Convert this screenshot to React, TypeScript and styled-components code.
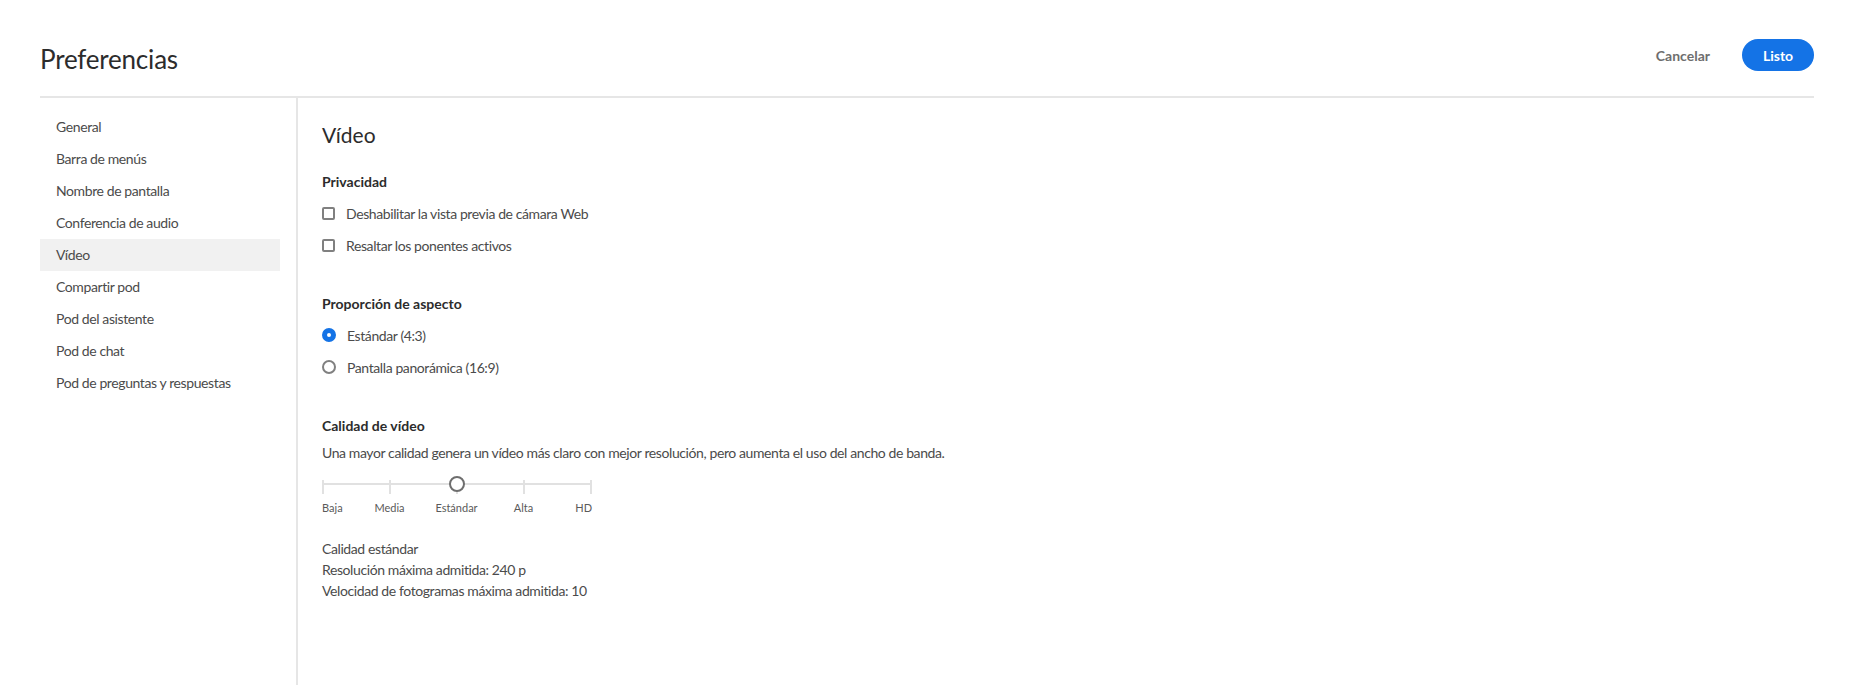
import React, { useState } from 'react';
import styled, { createGlobalStyle } from 'styled-components';

const GlobalStyle = createGlobalStyle`
  html, body {
    margin: 0;
    padding: 0;
    background: #ffffff;
  }
  body {
    font-family: Lato, "Noto Sans", "Liberation Sans", sans-serif;
    color: #4b4b4b;
    -webkit-font-smoothing: antialiased;
  }
  * {
    box-sizing: border-box;
  }
`;

const Page = styled.div`
  display: flex;
  flex-direction: column;
  height: 685px;
  padding: 0 38px 0 40px;
`;

const Header = styled.header`
  display: flex;
  align-items: flex-start;
  height: 98px;
  padding-top: 39px;
  border-bottom: 2px solid #e6e6e6;
`;

const Title = styled.h1`
  flex: 1;
  margin: 4px 0 0 0;
  font-size: 26px;
  line-height: 32px;
  font-weight: 400;
  letter-spacing: -0.2px;
  color: #2c2c2c;
`;

const Actions = styled.div`
  display: flex;
  align-items: center;
  gap: 16px;
`;

const QuietButton = styled.button`
  height: 32px;
  padding: 0 16px;
  border: none;
  background: transparent;
  font-family: inherit;
  font-size: 14px;
  font-weight: 700;
  color: #6e6e6e;
  cursor: pointer;
`;

const PrimaryButton = styled.button`
  height: 32px;
  min-width: 72px;
  padding: 0 18px;
  border: none;
  border-radius: 16px;
  background: #1473e6;
  font-family: inherit;
  font-size: 14px;
  font-weight: 700;
  color: #ffffff;
  cursor: pointer;
`;

const Body = styled.div`
  flex: 1;
  display: flex;
  min-height: 0;
`;

const Sidebar = styled.nav`
  width: 258px;
  padding: 13px 16px 0 0;
  border-right: 2px solid #e6e6e6;
  display: flex;
  flex-direction: column;
`;

const NavItem = styled.div<{ $active?: boolean }>`
  height: 32px;
  line-height: 32px;
  padding-left: 16px;
  font-size: 14px;
  letter-spacing: -0.4px;
  color: #4b4b4b;
  background: ${(p) => (p.$active ? '#f1f1f1' : 'transparent')};
  cursor: pointer;
`;

const Content = styled.main`
  flex: 1;
  padding: 23px 0 0 24px;
`;

const PanelTitle = styled.h2`
  margin: 0;
  font-size: 21px;
  line-height: 28px;
  font-weight: 400;
  color: #2c2c2c;
`;

const Section = styled.section<{ $first?: boolean }>`
  margin-top: ${(p) => (p.$first ? '23px' : '33px')};
`;

const SectionTitle = styled.h3`
  margin: 0;
  font-size: 14px;
  line-height: 20px;
  font-weight: 700;
  color: #2c2c2c;
`;

const Options = styled.div`
  margin-top: 5px;
  display: flex;
  flex-direction: column;
`;

const OptionRow = styled.label`
  display: flex;
  align-items: center;
  gap: 11px;
  height: 32px;
  font-size: 14px;
  letter-spacing: -0.4px;
  color: #4b4b4b;
  cursor: pointer;
`;

const CheckBox = styled.span`
  width: 13px;
  height: 13px;
  border: 2px solid #808080;
  border-radius: 2px;
  background: #ffffff;
  flex-shrink: 0;
`;

const Radio = styled.span<{ $checked?: boolean }>`
  width: 14px;
  height: 14px;
  border-radius: 50%;
  flex-shrink: 0;
  border: ${(p) => (p.$checked ? '5px solid #1473e6' : '2px solid #808080')};
  background: #ffffff;
`;

const Description = styled.p`
  margin: 7px 0 0 0;
  font-size: 14px;
  line-height: 20px;
  letter-spacing: -0.4px;
  color: #4b4b4b;
`;

const Slider = styled.div`
  position: relative;
  width: 270px;
  height: 24px;
  margin-top: 10px;
`;

const Track = styled.div`
  position: absolute;
  left: 0;
  right: 0;
  top: 10px;
  height: 2px;
  background: #e1e1e1;
`;

const Ticks = styled.div`
  position: absolute;
  left: 0;
  right: 0;
  top: 7px;
  display: flex;
  justify-content: space-between;
`;

const Tick = styled.span`
  width: 2px;
  height: 14px;
  background: #e1e1e1;
`;

const Thumb = styled.span`
  position: absolute;
  top: 3px;
  width: 16px;
  height: 16px;
  margin-left: -7px;
  border-radius: 50%;
  border: 2px solid #6e6e6e;
  background: #ffffff;
`;

const Labels = styled.div`
  width: 270px;
  margin-top: 3px;
  display: grid;
  grid-template-columns: 34px 67px 67px 67px 35px;
  font-size: 11px;
  line-height: 16px;
  color: #5a5a5a;
`;

const StopLabel = styled.span<{ $align: 'left' | 'center' | 'right' }>`
  white-space: nowrap;
  display: flex;
  justify-content: ${(p) =>
    p.$align === 'left' ? 'flex-start' : p.$align === 'right' ? 'flex-end' : 'center'};
`;

const Info = styled.div`
  margin-top: 22px;
  font-size: 14px;
  line-height: 21px;
  letter-spacing: -0.4px;
  color: #4b4b4b;
`;

const navItems = [
  'General',
  'Barra de menús',
  'Nombre de pantalla',
  'Conferencia de audio',
  'Vídeo',
  'Compartir pod',
  'Pod del asistente',
  'Pod de chat',
  'Pod de preguntas y respuestas',
];

const stops = ['Baja', 'Media', 'Estándar', 'Alta', 'HD'];

const App = () => {
  const [selected, setSelected] = useState('Vídeo');
  const [ratio, setRatio] = useState(0);
  const quality = 2;

  return (
    <>
      <GlobalStyle />
      <Page>
        <Header>
          <Title>Preferencias</Title>
          <Actions>
            <QuietButton>Cancelar</QuietButton>
            <PrimaryButton>Listo</PrimaryButton>
          </Actions>
        </Header>
        <Body>
          <Sidebar>
            {navItems.map((item) => (
              <NavItem
                key={item}
                $active={item === selected}
                onClick={() => setSelected(item)}
              >
                {item}
              </NavItem>
            ))}
          </Sidebar>
          <Content>
            <PanelTitle>Vídeo</PanelTitle>

            <Section $first>
              <SectionTitle>Privacidad</SectionTitle>
              <Options>
                <OptionRow>
                  <CheckBox />
                  Deshabilitar la vista previa de cámara Web
                </OptionRow>
                <OptionRow>
                  <CheckBox />
                  Resaltar los ponentes activos
                </OptionRow>
              </Options>
            </Section>

            <Section>
              <SectionTitle>Proporción de aspecto</SectionTitle>
              <Options>
                <OptionRow onClick={() => setRatio(0)}>
                  <Radio $checked={ratio === 0} />
                  Estándar (4:3)
                </OptionRow>
                <OptionRow onClick={() => setRatio(1)}>
                  <Radio $checked={ratio === 1} />
                  Pantalla panorámica (16:9)
                </OptionRow>
              </Options>
            </Section>

            <Section>
              <SectionTitle>Calidad de vídeo</SectionTitle>
              <Description>
                Una mayor calidad genera un vídeo más claro con mejor resolución, pero
                aumenta el uso del ancho de banda.
              </Description>
              <Slider>
                <Track />
                <Ticks>
                  {stops.map((s) => (
                    <Tick key={s} />
                  ))}
                </Ticks>
                <Thumb style={{ left: quality * 67 }} />
              </Slider>
              <Labels>
                {stops.map((s, i) => (
                  <StopLabel
                    key={s}
                    $align={i === 0 ? 'left' : i === stops.length - 1 ? 'right' : 'center'}
                  >
                    {s}
                  </StopLabel>
                ))}
              </Labels>
              <Info>
                <div>Calidad estándar</div>
                <div>Resolución máxima admitida: 240 p</div>
                <div>Velocidad de fotogramas máxima admitida: 10</div>
              </Info>
            </Section>
          </Content>
        </Body>
      </Page>
    </>
  );
};

export default App;
